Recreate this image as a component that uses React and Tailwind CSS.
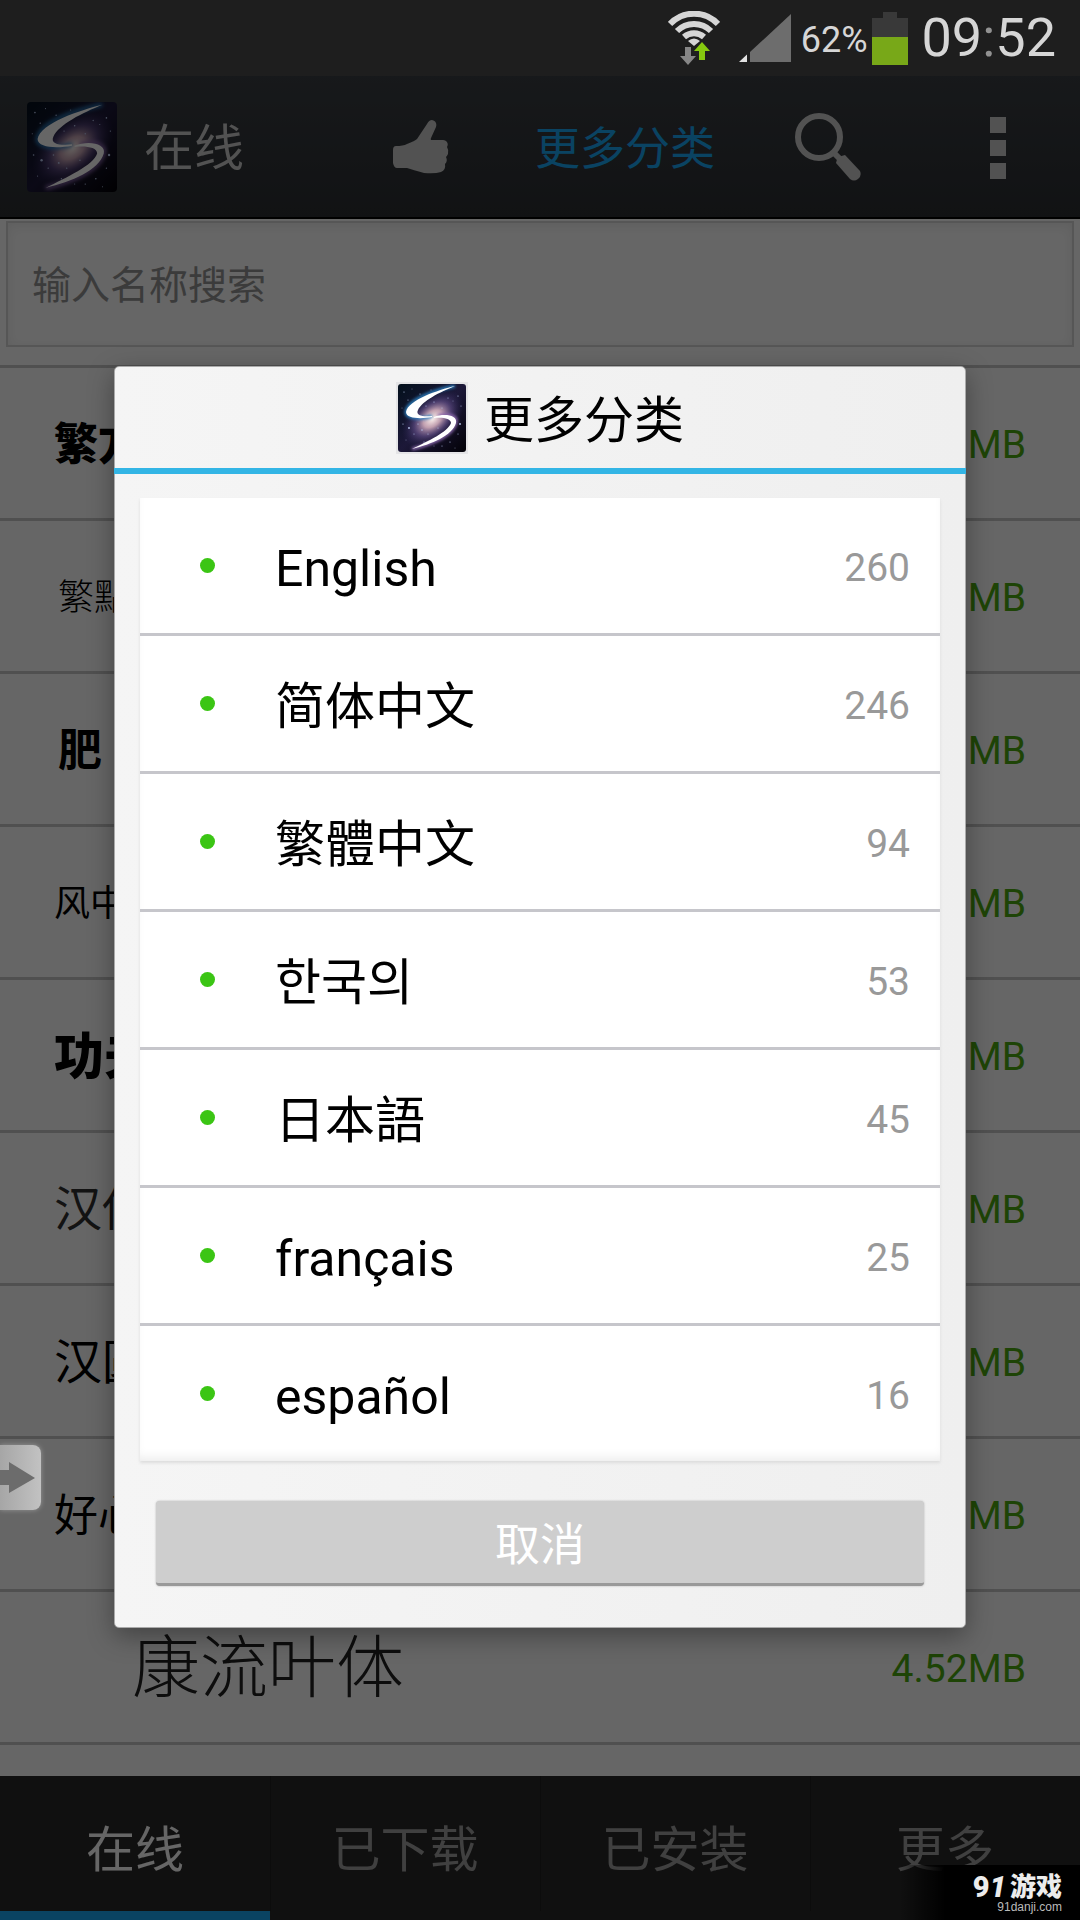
import React from "react";

const previews = [
  { name: "繁方", style: "text-[44px] font-black text-black" },
  { name: "繁點", style: "pl-1 text-[36px] font-light text-black" },
  { name: "肥", style: "pl-1 text-[44px] font-bold text-black" },
  { name: "风中", style: "text-[36px] font-normal text-black" },
  { name: "功夫", style: "text-[50px] font-black text-black" },
  { name: "汉仪", style: "text-[48px] font-normal text-[#303030]" },
  { name: "汉圆", style: "text-[48px] font-normal text-black" },
  { name: "好心", style: "text-[44px] font-normal text-black" },
];

const languages = [
  ["English", "260"],
  ["简体中文", "246"],
  ["繁體中文", "94"],
  ["한국의", "53"],
  ["日本語", "45"],
  ["français", "25"],
  ["español", "16"],
];

const tabs = ["在线", "已下载", "已安装", "更多"];

const stars = [
  [6, 8, 0.6], [14, 5, 0.4], [22, 10, 0.5], [10, 16, 0.5], [33, 6, 0.4], [60, 12, 0.6], [63, 22, 0.5],
  [55, 17, 0.4], [5, 40, 0.6], [11, 44, 0.9], [16, 50, 0.5], [8, 56, 0.4], [24, 46, 0.7], [30, 50, 0.5],
  [20, 40, 0.6], [62, 40, 0.9], [60, 50, 0.5], [52, 58, 0.6], [44, 62, 0.5], [57, 64, 0.4], [36, 62, 0.4],
  [28, 22, 0.5], [36, 18, 0.6], [44, 24, 0.5], [50, 14, 0.5], [4, 24, 0.4], [26, 58, 0.5], [40, 44, 0.5],
];

function Galaxy({ id, className }) {
  return (
    <svg viewBox="0 0 68 68" className={className} aria-hidden="true">
      <defs>
        <linearGradient id={`${id}-sky`} x1="0" y1="0" x2="1" y2="1">
          <stop offset="0" stopColor="#03101c" />
          <stop offset=".5" stopColor="#1c1838" />
          <stop offset="1" stopColor="#020106" />
        </linearGradient>
        <radialGradient id={`${id}-core`} cx=".5" cy=".5" r=".5">
          <stop offset="0" stopColor="#fff3ee" />
          <stop offset=".3" stopColor="#d3aebd" stopOpacity=".9" />
          <stop offset=".6" stopColor="#6a5490" stopOpacity=".6" />
          <stop offset="1" stopColor="#2a2458" stopOpacity="0" />
        </radialGradient>
        <filter id={`${id}-glow`} x="-20%" y="-20%" width="140%" height="140%">
          <feGaussianBlur stdDeviation="1.6" />
        </filter>
        <filter id={`${id}-soft`}>
          <feGaussianBlur stdDeviation="0.6" />
        </filter>
        <clipPath id={`${id}-clip`}>
          <rect width="68" height="68" rx="3" />
        </clipPath>
      </defs>
      <g clipPath={`url(#${id}-clip)`}>
        <rect width="68" height="68" fill={`url(#${id}-sky)`} />
        <ellipse cx="34" cy="35" rx="36" ry="23" transform="rotate(-42 34 34)" fill={`url(#${id}-core)`} />
        <path d="M57 2C38 6 10 15 8 28C8 34 22 36 34 32" fill="none" stroke="#2b7fc0" strokeWidth="3" filter={`url(#${id}-glow)`} />
        <path d="M40 32C50 29 60 32 58 39C54 52 34 60 14 65" fill="none" stroke="#8a67ac" strokeWidth="3" filter={`url(#${id}-glow)`} />
        <g fill="#fff" filter={`url(#${id}-soft)`}>
          <path d="M57 2C40 6 10 16 8 28C8 35 24 35 34 33L34 32C26 33 17 32 20 26C24 17 42 8 57 2Z" />
          <path d="M36 33C46 29 60 31 58 39C54 52 34 60 14 65C30 57 50 48 53 39C53 34 44 33 36 34Z" />
        </g>
        {stars.map(([x, y, r]) => (
          <circle key={`${x}-${y}`} cx={x} cy={y} r={r} fill="#b9c8ef" />
        ))}
      </g>
    </svg>
  );
}

function StatusBar() {
  return (
    <div className="flex h-[76px] shrink-0 items-center justify-end bg-[#1e1e1e] pr-[24px] font-['Roboto'] text-[#d6d6d6]">
      <svg width="52" height="54" viewBox="0 0 52 54" className="mr-[19px]" aria-label="Wi-Fi">
        <g fill="none" stroke="#d6d6d6" strokeWidth="6">
          <path d="M2 13A33 33 0 0 1 50 13" />
          <path d="M9 20A24 24 0 0 1 43 20" />
          <path d="M16 26A15 15 0 0 1 36 26" />
        </g>
        <path d="M20 30Q26 25 32 30L26 35Z" fill="#d6d6d6" />
        <path d="M17 36h6v9h5l-8 9l-8-9h5z" fill="#868686" />
        <path d="M31 49h6v-9h5l-8-9l-8 9h5z" fill="#86c90f" />
      </svg>
      <svg width="52" height="48" viewBox="0 0 52 48" className="mr-[10px]" aria-label="信号">
        <path d="M11 48V38L52 0V48Z" fill="#6d6d6d" />
        <path d="M0 48L8 40.500V48Z" fill="#e2e2e2" />
      </svg>
      <span className="mr-1 pt-1 text-[36px] leading-none">62%</span>
      <svg width="36" height="54" viewBox="0 0 36 54" className="mr-[14px]" aria-label="电池">
        <path d="M11 1h14v6h11v47H0V7h11z" fill="#393939" />
        <rect y="26" width="36" height="28" fill="#78a818" />
      </svg>
      <span className="text-[54px] leading-none">
        09<span className="text-[#929292]">:</span>52
      </span>
    </div>
  );
}

function Header() {
  return (
    <header className="flex h-[143px] shrink-0 items-center border-b-2 border-black bg-gradient-to-b from-[#3b3f44] to-[#2c2f33] pl-[27px]">
      <Galaxy id="header" className="size-[90px] shrink-0" />
      <h1 className="ml-[27px] pt-1 text-[50px] leading-none text-[#ccc]">在线</h1>
      <button type="button" aria-label="推荐" className="ml-auto px-10">
        <svg width="56" height="54" viewBox="0 0 56 54" fill="#ccc">
          <path d="M39 0C43 1 44 4 43 7L38 18Q37 20 39 20L50 20C54 20 56 24 54 27Q56 30 55 34Q54 36 53 37Q55 41 52 44Q53 50 48 52Q42 54 31 53Q20 50 14 48L4 48Q1 48 0 43L0 30Q0 26 3 26Q10 26 14 24Q22 21 24 19L34 4Q36 0 39 0Z" />
        </svg>
      </button>
      <button type="button" className="px-[46px] pt-1.5 text-[45px] leading-none text-[#19a9f5]">更多分类</button>
      <button type="button" aria-label="搜索" className="px-[34px]">
        <svg width="66" height="68" viewBox="0 0 66 68" fill="none" stroke="#ccc">
          <circle cx="24" cy="24" r="21" strokeWidth="6" />
          <path d="M38 39L47 48" strokeWidth="6" />
          <path d="M41 50Q42 43 50 42L65 58Q67 63 63 66Q59 69 55 66Z" fill="#ccc" stroke="none" />
        </svg>
      </button>
      <button type="button" aria-label="菜单" className="flex flex-col gap-[7px] pl-[95px] pr-[74px] pt-0.5">
        <span className="size-4 bg-[#ccc]" />
        <span className="size-4 bg-[#ccc]" />
        <span className="size-4 bg-[#ccc]" />
      </button>
    </header>
  );
}

function FontList() {
  return (
    <main className="bg-white">
      <div className="border-b-[3px] border-[#c8c8c8] px-1.5 pb-[18px] pt-0.5">
        <input
          type="text"
          aria-label="输入名称搜索"
          placeholder="输入名称搜索"
          className="block h-[126px] w-full border-2 border-[#d8d8d8] bg-white px-6 pt-1 text-[39px] text-black shadow-[inset_0_3px_12px_#ececec] placeholder:text-[#949494]"
        />
      </div>
      <ul>
        {previews.map((item) => (
          <li key={item.name} className="flex h-[153px] items-center justify-between border-b-[3px] border-[#c8c8c8] pl-[54px] pr-[54px] pt-1">
            <span className={`leading-none ${item.style}`}>{item.name}</span>
            <span className="text-[39px] leading-none text-[#4daa0f]">MB</span>
          </li>
        ))}
        <li className="flex h-[153px] items-center justify-between border-b-[3px] border-[#c8c8c8] pl-[132px] pr-[54px] pt-1">
          <span className="text-[68px] font-light leading-none text-[#222]">康流叶体</span>
          <span className="text-[39px] leading-none text-[#4daa0f]">4.52MB</span>
        </li>
      </ul>
    </main>
  );
}

function TabBar() {
  return (
    <nav className="mt-auto grid h-36 shrink-0 grid-cols-4 bg-[#2a2a2a]">
      {tabs.map((tab, i) => (
        <button
          key={tab}
          type="button"
          className={`border-b-[9px] pt-3.5 text-[49px] leading-none ${
            i === 0 ? "border-b-[#19a9f5] text-white" : "border-b-transparent text-[#a0a0a0] shadow-[inset_1px_0_0_#202020]"
          }`}
        >
          {tab}
        </button>
      ))}
    </nav>
  );
}

function CategoryDialog() {
  return (
    <div
      role="dialog"
      aria-labelledby="dialog-title"
      className="w-full rounded-[5px] border border-[#aaa] bg-gradient-to-r from-[#f5f5f5] to-[#efefef] shadow-[0_8px_26px_rgba(0,0,0,0.35)]"
    >
      <div className="-mx-px flex h-[107px] items-center justify-center gap-4 border-b-[6px] border-[#33b5e5]">
        <span className="bg-[#e4e4e6] p-0.5">
          <Galaxy id="dialog" className="size-[68px]" />
        </span>
        <h2 id="dialog-title" className="pt-1.5 text-[50px] leading-none text-black">更多分类</h2>
      </div>
      <ul className="mx-[25px] mt-6 bg-white shadow-[inset_0_-8px_12px_-6px_#e8e8e8,0_2px_3px_#dcdcdc]">
        {languages.map(([name, count]) => (
          <li key={name} className="border-b-[3px] border-[#c6c6cb] last:border-b-0">
            <button type="button" className="flex h-[135px] w-full items-center pl-[60px] pr-[30px] text-left">
              <span className="mr-[60px] size-[15px] rounded-full bg-[#3bc514]" />
              <span className="pt-1.5 text-[50px] leading-none text-black">{name}</span>
              <span className="ml-auto pt-1.5 text-[39px] leading-none text-[#999]">{count}</span>
            </button>
          </li>
        ))}
      </ul>
      <div className="px-[41px] pb-[41px] pt-10">
        <button type="button" className="block h-[85px] w-full rounded-[4px] border-b-[3px] border-[#999] bg-[#cecece] pt-1.5 text-[45px] leading-none text-white shadow-[0_0_2px_#aaa]">
          取消
        </button>
      </div>
    </div>
  );
}

function Watermark() {
  return (
    <div className="absolute bottom-0 right-0 z-20 flex h-[55px] w-[180px] flex-col items-end bg-gradient-to-r from-transparent via-black via-25% to-black pr-[18px] pt-2.5">
      <div className="flex items-center gap-1 text-[#ececec]">
        <span className="flex items-center font-['Roboto'] text-[29px] font-black leading-6">
          9<i>1</i>
        </span>
        <span className="text-[26px] font-black leading-6">游戏</span>
      </div>
      <span className="mt-0.5 font-['Liberation_Sans'] text-[12px] leading-3 text-[#bbb]">91danji.com</span>
    </div>
  );
}

export default function App() {
  return (
    <div className="relative flex min-h-dvh flex-col overflow-hidden bg-white font-['Roboto','Noto_Sans_CJK_SC',sans-serif]">
      <StatusBar />
      <Header />
      <FontList />
      <TabBar />
      <div className="absolute inset-x-0 bottom-0 top-[76px] z-10 flex items-center bg-black/60 px-[114px] pb-0.5">
        <CategoryDialog />
      </div>
      <button
        type="button"
        aria-label="展开"
        className="absolute left-0 top-[1445px] z-20 h-[65px] w-[41px] rounded-r-lg bg-gradient-to-r from-[#a6a6a6] to-[#c2c2c2] shadow-[0_0_5px_#999]"
      >
        <svg width="35" height="32" viewBox="0 0 35 32" fill="#6c6c6c">
          <path d="M0 8H9V0L35 16L9 31V23H0Z" />
        </svg>
      </button>
      <Watermark />
    </div>
  );
}
